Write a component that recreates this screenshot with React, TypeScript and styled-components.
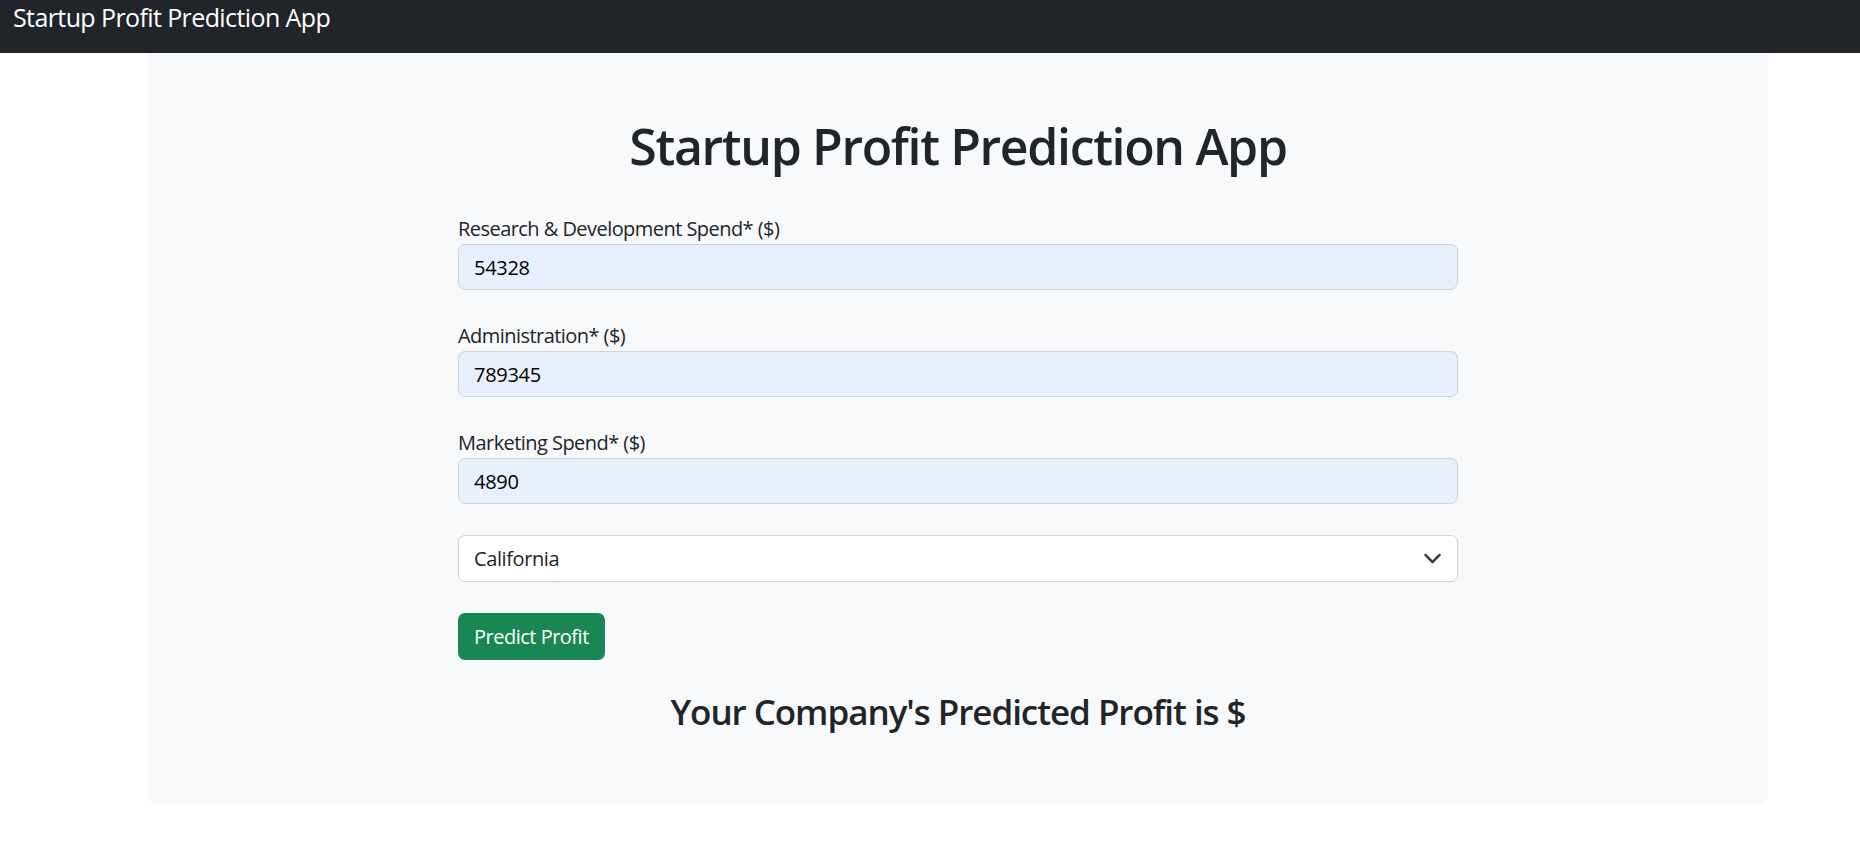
import React, { useState } from "react";
import styled, { createGlobalStyle } from "styled-components";

const GlobalStyle = createGlobalStyle`
  body {
    margin: 0;
    background: #ffffff;
    font-family: "Open Sans", "Noto Sans", sans-serif;
    color: #212529;
  }
`;

const Navbar = styled.nav`
  height: 53px;
  background: #212529;
  padding-left: 13px;
  display: flex;
  align-items: flex-start;
`;

const Brand = styled.span`
  font-size: 25px;
  line-height: 35px;
  color: #ffffff;
  letter-spacing: -0.6px;
`;

const Panel = styled.main`
  margin-left: 148px;
  width: 1620px;
  background: #f8f9fa;
  border-radius: 0 0 8px 8px;
  padding: 63px 0 71px;
`;

const Title = styled.h1`
  margin: 0 0 38px;
  font-size: 50px;
  line-height: 60px;
  font-weight: 600;
  text-align: center;
  letter-spacing: -1.35px;
`;

const Form = styled.form`
  width: 1000px;
  margin: 0 auto;
  display: flex;
  flex-direction: column;
`;

const FieldGroup = styled.div`
  display: flex;
  flex-direction: column;
  margin-bottom: 31px;
`;

const Label = styled.label`
  font-size: 20px;
  line-height: 30px;
  letter-spacing: -0.55px;
`;

const Input = styled.input`
  box-sizing: border-box;
  height: 46px;
  padding: 0 15px;
  font-family: inherit;
  font-size: 20px;
  color: #000000;
  background: #e8f0fe;
  border: 1px solid #ced4da;
  border-radius: 7px;
  outline: none;
  letter-spacing: -0.3px;
`;

const SelectWrap = styled.div`
  position: relative;
  margin-bottom: 31px;
`;

const Select = styled.select`
  box-sizing: border-box;
  width: 100%;
  height: 47px;
  padding: 0 15px;
  font-family: inherit;
  font-size: 20px;
  color: #212529;
  background: #ffffff;
  border: 1px solid #ced4da;
  border-radius: 7px;
  appearance: none;
  outline: none;
  letter-spacing: -0.4px;
`;

const Chevron = styled.svg`
  position: absolute;
  right: 16px;
  top: 14px;
  pointer-events: none;
`;

const PredictButton = styled.button`
  align-self: flex-start;
  height: 47px;
  padding: 0 16px;
  font-family: inherit;
  font-size: 20px;
  color: #ffffff;
  background: #198754;
  border: none;
  border-radius: 7px;
  cursor: pointer;
  letter-spacing: -0.5px;
`;

const Result = styled.h3`
  margin: 31px 0 0;
  font-size: 35px;
  line-height: 42px;
  font-weight: 600;
  text-align: center;
  letter-spacing: -1.05px;
`;

const fields = [
  { id: "rd", label: "Research & Development Spend* ($)", value: "54328" },
  { id: "admin", label: "Administration* ($)", value: "789345" },
  { id: "marketing", label: "Marketing Spend* ($)", value: "4890" },
];

const App: React.FC = () => {
  const [state, setState] = useState("California");

  return (
    <>
      <GlobalStyle />
      <Navbar>
        <Brand>Startup Profit Prediction App</Brand>
      </Navbar>
      <Panel>
        <Title>Startup Profit Prediction App</Title>
        <Form onSubmit={(e) => e.preventDefault()}>
          {fields.map((f) => (
            <FieldGroup key={f.id}>
              <Label htmlFor={f.id}>{f.label}</Label>
              <Input id={f.id} defaultValue={f.value} />
            </FieldGroup>
          ))}
          <SelectWrap>
            <Select value={state} onChange={(e) => setState(e.target.value)}>
              <option>California</option>
              <option>Florida</option>
              <option>New York</option>
            </Select>
            <Chevron width="19" height="19" viewBox="0 0 16 16">
              <path
                d="m2 5 6 6 6-6"
                fill="none"
                stroke="#343a40"
                strokeWidth="2"
                strokeLinecap="round"
                strokeLinejoin="round"
              />
            </Chevron>
          </SelectWrap>
          <PredictButton type="submit">Predict Profit</PredictButton>
        </Form>
        <Result>Your Company's Predicted Profit is $</Result>
      </Panel>
    </>
  );
};

export default App;
